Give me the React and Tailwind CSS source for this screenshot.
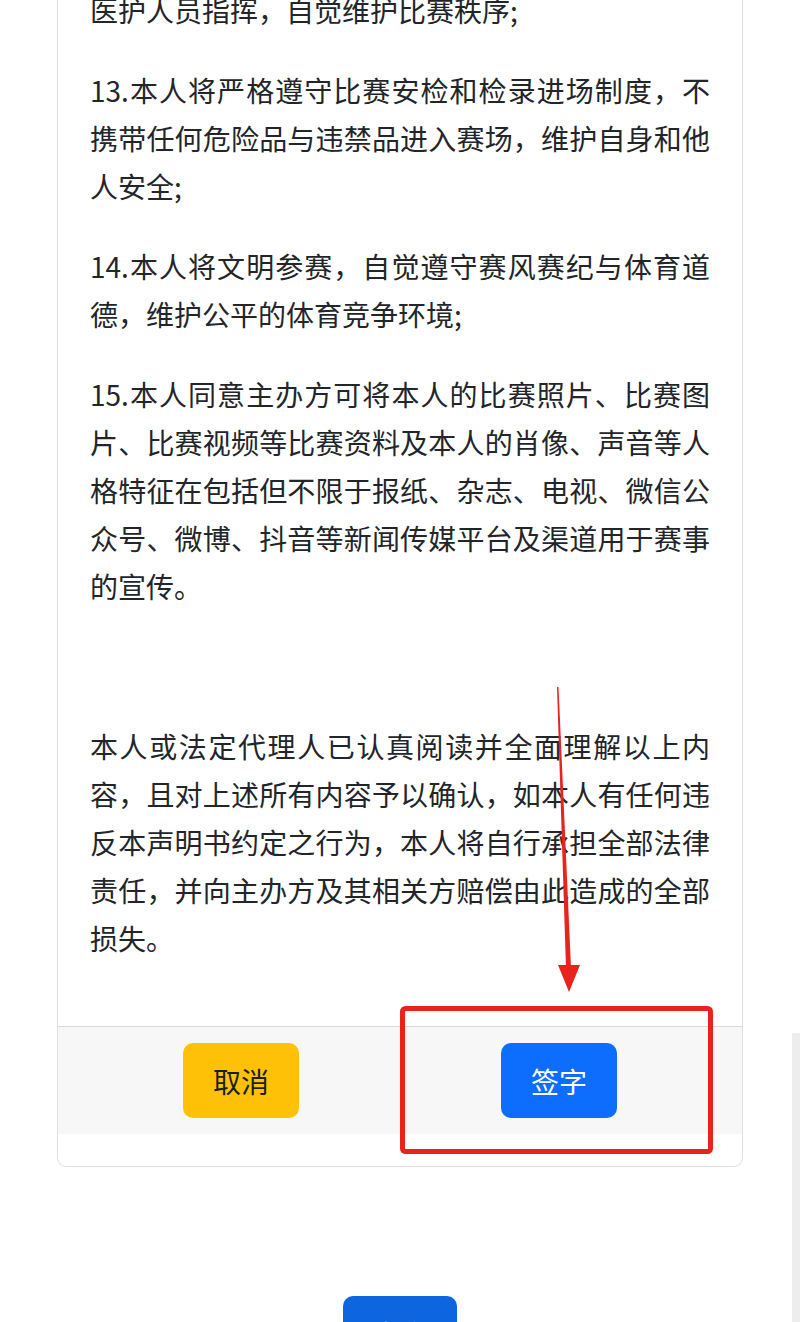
const FONT = { fontFamily: '"Noto Sans CJK SC", "Noto Sans", sans-serif' };

const PARAGRAPHS = [
  '医护人员指挥，自觉维护比赛秩序;',
  '13.本人将严格遵守比赛安检和检录进场制度，不携带任何危险品与违禁品进入赛场，维护自身和他人安全;',
  '14.本人将文明参赛，自觉遵守赛风赛纪与体育道德，维护公平的体育竞争环境;',
  '15.本人同意主办方可将本人的比赛照片、比赛图片、比赛视频等比赛资料及本人的肖像、声音等人格特征在包括但不限于报纸、杂志、电视、微信公众号、微博、抖音等新闻传媒平台及渠道用于赛事的宣传。',
  '',
  '本人或法定代理人已认真阅读并全面理解以上内容，且对上述所有内容予以确认，如本人有任何违反本声明书约定之行为，本人将自行承担全部法律责任，并向主办方及其相关方赔偿由此造成的全部损失。',
];

function Annotation() {
  return (
    <svg
      className="absolute left-0 top-0 pointer-events-none"
      width="800"
      height="1322"
      viewBox="0 0 800 1322"
    >
      {/* tapered arrow shaft */}
      <polygon points="557,687 558.5,687 571,968 566,968" fill="#e8221c" />
      {/* arrow head */}
      <polygon points="558,965 580,965 569,992" fill="#e8221c" />
      {/* box round the sign button */}
      <rect
        x="402.5"
        y="1008.5"
        width="308"
        height="143"
        rx="3"
        fill="none"
        stroke="#e8221c"
        strokeWidth="5"
      />
    </svg>
  );
}

export default function App() {
  return (
    <div className="relative h-[1322px] w-[800px] overflow-hidden bg-white" style={FONT}>
      <div className="flex flex-col">
        <div className="mx-[57px] -mt-[47px] w-[686px] rounded-b-[9px] border border-[#dcdfe3] bg-white pb-[32px]">
          <div className="p-[32px] text-[28px] leading-[48px] text-[#222529] text-justify">
            {PARAGRAPHS.map((p, i) => (
              <p key={i} className="mb-[32px]">
                {p || <br />}
              </p>
            ))}
          </div>
          <div className="flex justify-center gap-[202px] border-t border-[#d6d8db] bg-[#f7f7f8] pt-[16px] pb-[16px]">
            <button className="flex h-[75px] w-[116px] items-center justify-center rounded-[10px] bg-[#ffc107] text-[28px] text-[#1d1d1d]">
              取消
            </button>
            <button className="flex h-[75px] w-[116px] items-center justify-center rounded-[10px] bg-[#0d6efd] text-[28px] text-white">
              签字
            </button>
          </div>
        </div>

        <div className="mt-[129px] flex justify-center">
          <button className="flex h-[75px] w-[114px] items-center justify-center rounded-[10px] bg-[#0d66e0] text-[28px] text-white">
            查询
          </button>
        </div>
      </div>

      <div className="absolute right-0 top-[1033px] bottom-0 w-[8px] bg-[#ededed]" />
      <Annotation />
    </div>
  );
}
